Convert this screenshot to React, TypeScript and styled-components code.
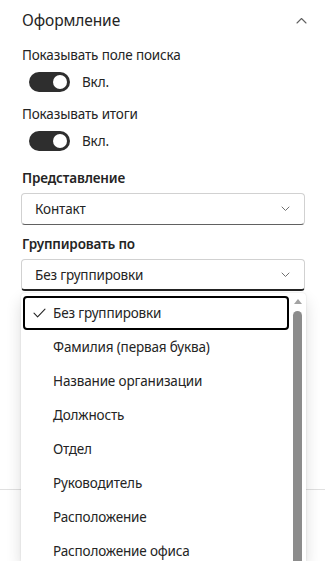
import React from "react";
import styled, { createGlobalStyle } from "styled-components";

const Global = createGlobalStyle`
  html, body { margin: 0; padding: 0; background: #ffffff; }
  body { font-family: "Noto Sans", "Open Sans", sans-serif; color: #242424; -webkit-font-smoothing: antialiased; }
  * { box-sizing: border-box; }
`;

const Panel = styled.div`
  position: relative;
  width: 325px;
  height: 561px;
  overflow: hidden;
  background: #ffffff;
  display: flex;
  flex-direction: column;
`;

const Content = styled.div`
  padding: 0 20px 0 21px;
  display: flex;
  flex-direction: column;
  height: 489px;
`;

const Footer = styled.div`
  flex: 1;
  border-top: 1px solid #e0e0e0;
`;

const Header = styled.div`
  height: 40px;
  display: flex;
  align-items: center;
  justify-content: space-between;
  padding-left: 1px;
`;

const Title = styled.div`
  font-size: 15.5px;
  line-height: 22px;
  letter-spacing: -0.1px;
  color: #242424;
`;

const IconBtn = styled.span`
  display: flex;
  width: 16px;
  height: 16px;
  align-items: center;
  justify-content: center;
  margin-right: -4px;
`;

const Label = styled.div<{ $bold?: boolean; $mt: number }>`
  font-size: 13.5px;
  line-height: 20px;
  letter-spacing: -0.15px;
  font-weight: ${(p) => (p.$bold ? 600 : 400)};
  margin-top: ${(p) => p.$mt}px;
  padding-left: 1px;
  color: #242424;
`;

const SwitchRow = styled.div`
  display: flex;
  align-items: center;
  height: 20px;
  margin-top: 7px;
  padding-left: 8px;
  gap: 12px;
`;

const Track = styled.span`
  position: relative;
  width: 41px;
  height: 20px;
  border-radius: 10px;
  background: #2e2e2e;
`;

const Knob = styled.span`
  position: absolute;
  right: 3px;
  top: 3px;
  width: 14px;
  height: 14px;
  border-radius: 50%;
  background: #ffffff;
`;

const SwitchText = styled.span`
  font-size: 13.5px;
  line-height: 20px;
  letter-spacing: -0.15px;
  color: #242424;
`;

const DropWrap = styled.div`
  position: relative;
  margin-top: 5px;
`;

const Dropdown = styled.div<{ $open?: boolean }>`
  height: 32px;
  border: 1px solid #d1d1d1;
  border-bottom: ${(p) => (p.$open ? "2px solid #242424" : "1px solid #616161")};
  border-radius: 4px;
  display: flex;
  align-items: center;
  justify-content: space-between;
  padding: 0 14px 0 13px;
  font-size: 13.5px;
  letter-spacing: -0.15px;
  color: #242424;
`;

const Listbox = styled.div`
  position: absolute;
  left: 0;
  top: 34px;
  width: 285px;
  height: 268px;
  overflow: hidden;
  background: #ffffff;
  border-radius: 4px 4px 0 0;
  box-shadow: 0 0 2px rgba(0, 0, 0, 0.12), 0 8px 16px rgba(0, 0, 0, 0.14);
  display: flex;
  z-index: 2;
`;

const Options = styled.div`
  flex: 1;
  padding: 3px 0 0 2px;
  display: flex;
  flex-direction: column;
`;

const Option = styled.div<{ $focused?: boolean }>`
  height: 34px;
  flex: none;
  display: flex;
  align-items: center;
  border-radius: 4px;
  border: 2px solid ${(p) => (p.$focused ? "#000000" : "transparent")};
  padding-left: 8px;
  font-size: 13.5px;
  letter-spacing: -0.15px;
  color: #242424;
`;

const Check = styled.span`
  width: 20px;
  display: flex;
  align-items: center;
`;

const Scrollbar = styled.div`
  width: 17px;
  padding: 6px 3px 0 3px;
  display: flex;
  flex-direction: column;
  align-items: center;
`;

const Arrow = styled.div`
  width: 0;
  height: 0;
  border-left: 4.5px solid transparent;
  border-right: 4.5px solid transparent;
  border-bottom: 5px solid #a3a3a3;
`;

const Thumb = styled.div`
  margin-top: 7px;
  width: 9px;
  flex: 1;
  background: #8c8c8c;
  border-radius: 5px 5px 0 0;
`;

const ChevronDown = () => (
  <svg width="9" height="6" viewBox="0 0 9 6">
    <path d="M1 1l3.5 3.5L8 1" fill="none" stroke="#707070" strokeWidth="1" strokeLinecap="round" strokeLinejoin="round" />
  </svg>
);

const options = [
  "Без группировки",
  "Фамилия (первая буква)",
  "Название организации",
  "Должность",
  "Отдел",
  "Руководитель",
  "Расположение",
  "Расположение офиса",
];

export default function App() {
  return (
    <>
      <Global />
      <Panel>
        <Content>
          <Header>
            <Title>Оформление</Title>
            <IconBtn>
              <svg width="11" height="7" viewBox="0 0 11 7">
                <path d="M1 6l4.5-4.5L10 6" fill="none" stroke="#616161" strokeWidth="1.1" strokeLinecap="round" strokeLinejoin="round" />
              </svg>
            </IconBtn>
          </Header>
          <Label $mt={5}>Показывать поле поиска</Label>
          <SwitchRow>
            <Track>
              <Knob />
            </Track>
            <SwitchText>Вкл.</SwitchText>
          </SwitchRow>
          <Label $mt={12}>Показывать итоги</Label>
          <SwitchRow>
            <Track>
              <Knob />
            </Track>
            <SwitchText>Вкл.</SwitchText>
          </SwitchRow>
          <Label $bold $mt={17}>Представление</Label>
          <DropWrap>
            <Dropdown>
              <span>Контакт</span>
              <ChevronDown />
            </Dropdown>
          </DropWrap>
          <Label $bold $mt={9}>Группировать по</Label>
          <DropWrap>
            <Dropdown $open>
              <span>Без группировки</span>
              <ChevronDown />
            </Dropdown>
            <Listbox>
              <Options>
                {options.map((o, i) => (
                  <Option key={o} $focused={i === 0}>
                    <Check>
                      {i === 0 && (
                        <svg width="13" height="10" viewBox="0 0 13 10">
                          <path d="M1 5.2l3.6 3.6L12 1.2" fill="none" stroke="#242424" strokeWidth="1.1" strokeLinecap="round" strokeLinejoin="round" />
                        </svg>
                      )}
                    </Check>
                    {o}
                  </Option>
                ))}
              </Options>
              <Scrollbar>
                <Arrow />
                <Thumb />
              </Scrollbar>
            </Listbox>
          </DropWrap>
        </Content>
        <Footer />
      </Panel>
    </>
  );
}
